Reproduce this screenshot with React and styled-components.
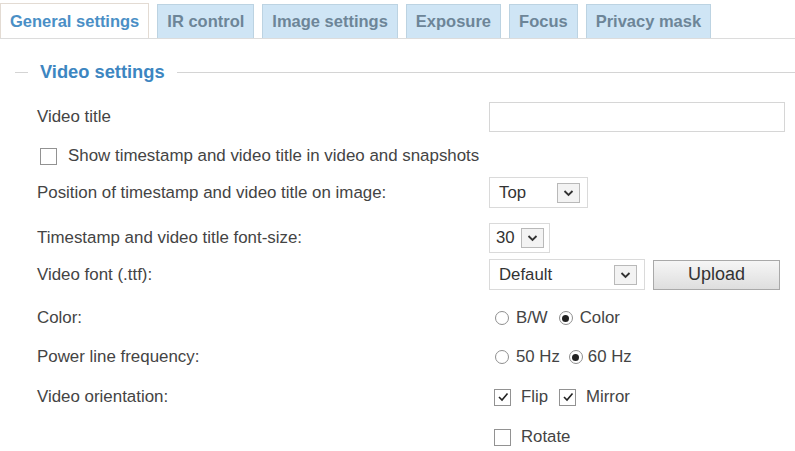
import React from "react";
import styled, { createGlobalStyle } from "styled-components";

const GlobalStyle = createGlobalStyle`
  body {
    margin: 0;
    background: #fff;
    font-family: "Liberation Sans", Arial, sans-serif;
  }
`;

const Page = styled.div`
  width: 795px;
  height: 451px;
  overflow: hidden;
  background: #fff;
`;

// tab strip
const TabBar = styled.div`
  display: flex;
  gap: 8px;
  padding-top: 3px;
  border-bottom: 1px solid #dcdcdc;
  height: 35px;
`;

const Tab = styled.div`
  display: flex;
  align-items: center;
  padding: 0 9px;
  height: ${(p) => (p.$active ? 35 : 34)}px;
  box-sizing: border-box;
  font-weight: bold;
  font-size: 16.5px;
  color: ${(p) => (p.$active ? "#4a8fc6" : "#6d8598")};
  background: ${(p) => (p.$active ? "#fff" : "#cfe5f5")};
  border: 1px solid ${(p) => (p.$active ? "#e3dbd3" : "#bcd3e2")};
  border-bottom: none;
  margin-top: ${(p) => (p.$active ? 0 : 1)}px;
`;

// legend line
const Legend = styled.div`
  display: flex;
  align-items: center;
  height: 20px;
  margin-top: 23px;
  padding-left: 15px;
`;

const Rule = styled.div`
  height: 1px;
  background: #d4d4d4;
  width: ${(p) => (p.$w ? `${p.$w}px` : "auto")};
  flex: ${(p) => (p.$w ? "none" : "1")};
`;

const LegendText = styled.div`
  font-weight: bold;
  font-size: 18.3px;
  color: #3d86c1;
  margin: 0 12px;
`;

// form rows
const Row = styled.div`
  display: grid;
  grid-template-columns: 452px 1fr;
  align-items: center;
  height: 30px;
  margin-top: ${(p) => p.$gap}px;
  padding-left: 37px;
`;

const Label = styled.div`
  font-size: 16.9px;
  color: #444;
`;

const Controls = styled.div`
  display: flex;
  align-items: center;
  font-size: 16.8px;
  color: #444;
`;

const TextBox = styled.div`
  width: 296px;
  height: 30px;
  box-sizing: border-box;
  border: 1px solid #d6d6d6;
`;

const Select = styled.div`
  width: ${(p) => p.$w}px;
  height: ${(p) => p.$h || 31}px;
  box-sizing: border-box;
  border: 1px solid #dadada;
  display: flex;
  align-items: center;
  justify-content: space-between;
  padding: 0 ${(p) => p.$pr || 7}px 0 ${(p) => p.$pl || 9}px;
  font-size: 16.8px;
  color: #333;
`;

const Arrow = styled.div`
  width: 23px;
  height: 20px;
  box-sizing: border-box;
  border: 1px solid #b9b9b9;
  background: #f3f3f3;
  display: flex;
  align-items: center;
  justify-content: center;
`;

const Button = styled.div`
  width: 127px;
  height: 30px;
  box-sizing: border-box;
  margin-left: 8px;
  border: 1px solid #a9a9a9;
  background: linear-gradient(#f6f6f6, #dedede);
  display: flex;
  align-items: center;
  justify-content: center;
  font-size: 18px;
  color: #333;
`;

const Box = styled.span`
  width: 17px;
  height: 17px;
  box-sizing: border-box;
  border: 1px solid #929292;
  background: #fff;
  display: inline-flex;
  align-items: center;
  justify-content: center;
  margin-left: ${(p) => p.$ml || 0}px;
  margin-right: ${(p) => p.$mr || 10}px;
`;

const Radio = styled.span`
  width: 14px;
  height: 14px;
  box-sizing: border-box;
  border-radius: 50%;
  border: 1px solid #8f8f8f;
  display: inline-flex;
  align-items: center;
  justify-content: center;
  margin-left: ${(p) => p.$ml || 0}px;
  margin-right: ${(p) => p.$mr || 7}px;
  &::after {
    content: "";
    width: 7px;
    height: 7px;
    border-radius: 50%;
    background: ${(p) => (p.$on ? "#222" : "transparent")};
  }
`;

const CheckRow = styled.div`
  display: flex;
  align-items: center;
  height: 30px;
  margin-top: 9px;
  padding-left: 40px;
  font-size: 16.9px;
  color: #444;
`;

const Chevron = () => (
  <svg width="11" height="8" viewBox="0 0 11 8">
    <path d="M1.5 2 L5.5 6 L9.5 2" fill="none" stroke="#333" strokeWidth="1.8" />
  </svg>
);

const Tick = () => (
  <svg width="12" height="10" viewBox="0 0 12 10">
    <path d="M2 5 L5 8 L10.5 1.5" fill="none" stroke="#222" strokeWidth="1.6" />
  </svg>
);

const tabs = [
  { name: "General settings", active: true },
  { name: "IR control" },
  { name: "Image settings" },
  { name: "Exposure" },
  { name: "Focus" },
  { name: "Privacy mask" },
];

export default function App() {
  return (
    <Page>
      <GlobalStyle />
      <TabBar>
        {tabs.map((t) => (
          <Tab key={t.name} $active={t.active}>
            {t.name}
          </Tab>
        ))}
      </TabBar>

      <Legend>
        <Rule $w={13} />
        <LegendText>Video settings</LegendText>
        <Rule />
      </Legend>

      <Row $gap={20}>
        <Label>Video title</Label>
        <Controls>
          <TextBox />
        </Controls>
      </Row>

      <CheckRow>
        <Box $mr={11} />
        Show timestamp and video title in video and snapshots
      </CheckRow>

      <Row $gap={6}>
        <Label>Position of timestamp and video title on image:</Label>
        <Controls>
          <Select $w={99}>
            Top
            <Arrow>
              <Chevron />
            </Arrow>
          </Select>
        </Controls>
      </Row>

      <Row $gap={16}>
        <Label>Timestamp and video title font-size:</Label>
        <Controls>
          <Select $w={61} $h={30} $pl={6} $pr={5}>
            30
            <Arrow>
              <Chevron />
            </Arrow>
          </Select>
        </Controls>
      </Row>

      <Row $gap={6}>
        <Label>Video font (.ttf):</Label>
        <Controls>
          <Select $w={156}>
            Default
            <Arrow>
              <Chevron />
            </Arrow>
          </Select>
          <Button>Upload</Button>
        </Controls>
      </Row>

      <Row $gap={14}>
        <Label>Color:</Label>
        <Controls>
          <Radio $ml={6} />
          B/W
          <Radio $on $ml={11} />
          Color
        </Controls>
      </Row>

      <Row $gap={9}>
        <Label>Power line frequency:</Label>
        <Controls>
          <Radio $ml={6} />
          50 Hz
          <Radio $on $ml={9} $mr={5} />
          60 Hz
        </Controls>
      </Row>

      <Row $gap={10}>
        <Label>Video orientation:</Label>
        <Controls>
          <Box $ml={5}>
            <Tick />
          </Box>
          Flip
          <Box $ml={11}>
            <Tick />
          </Box>
          Mirror
        </Controls>
      </Row>

      <Row $gap={10}>
        <Label />
        <Controls>
          <Box $ml={5} />
          Rotate
        </Controls>
      </Row>
    </Page>
  );
}
